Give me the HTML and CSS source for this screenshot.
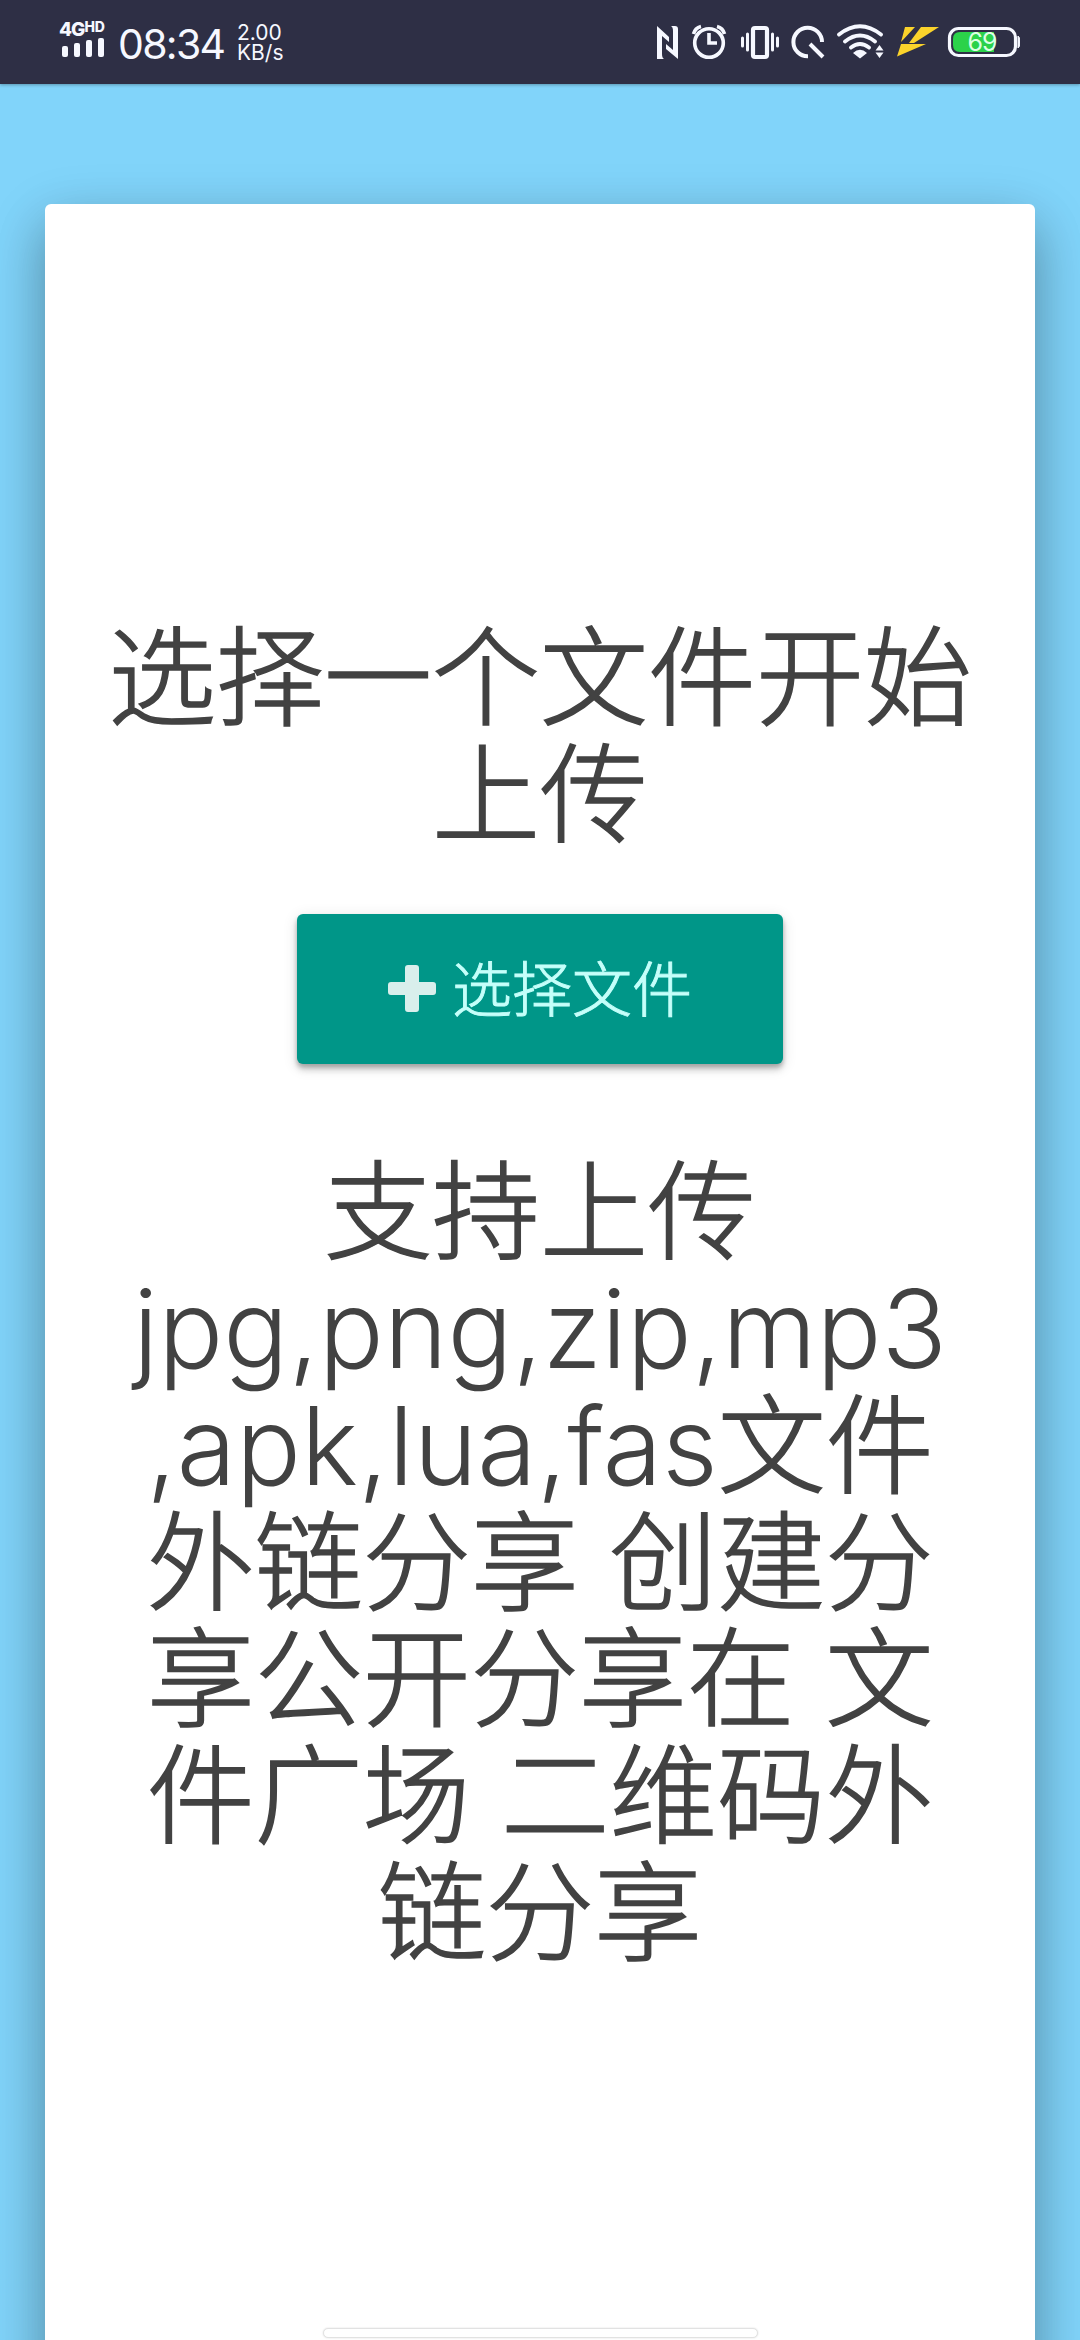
FILE: index.html
```
<!DOCTYPE html>
<html lang="zh-CN">
<head>
<meta charset="utf-8">
<title>选择文件</title>
<link rel="stylesheet" href="styles.css">
</head>
<body>
<header class="status">
  <div class="signal">
    <div class="net"><span class="gen">4G</span><span class="hd">HD</span></div>
    <div class="bars"><i class="b1"></i><i class="b2"></i><i class="b3"></i><i class="b4"></i></div>
  </div>
  <div class="clock">08:34</div>
  <div class="speed"><span>2.00</span><span>KB/s</span></div>
  <svg class="icons" width="370" height="44" viewBox="650 20 370 44" fill="none" stroke="#f6f8ff">
    <path d="M657 26 669 37V42L662 36V54Q662 58 664 59H657ZM678 59 666 49V44L673 50V31Q673 27 671 26H675Q678 26 678 29Z" fill="#f6f8ff" stroke="none"/>
    <g stroke-width="3.6">
      <circle cx="709" cy="43" r="14.300"/>
      <path d="M709 33V43H717"/>
      <path d="M693.500 34Q695 28 701 26.500M724.500 34Q723 28 717 26.500"/>
    </g>
    <rect x="753" y="28" width="14" height="29" rx="2" stroke-width="4.200"/>
    <path d="M742.500 38V46M747.500 34V50M772.500 34V50M777.500 38V46" stroke-width="3" stroke-linecap="round"/>
    <path d="M822 42A14.300 14.300 0 1 0 808 56.300M810 44 823 57" stroke-width="4"/>
    <g stroke-width="3.800" stroke-linecap="round">
      <path d="M839 34.500Q860 18 881 34.500M845 41.500Q860 29.500 875 41.500M851 47.500Q860 40.500 869 47.500"/>
    </g>
    <path d="M853 53Q860 46.500 867 53L860 58.500ZM875.500 50.500 879.500 45 883.500 50.500ZM875.500 52.500 879.500 58 883.500 52.500Z" fill="#f6f8ff" stroke="none"/>
    <path d="M905 27H915L901 42ZM921 27H939L914 43H909ZM901 44H926L897 56.500Z" fill="#fbd32b" stroke="none"/>
    <rect x="949.500" y="28.500" width="66" height="27" rx="9" stroke-width="3.200"/>
    <path d="M1018 36Q1020 37 1020 42T1018 48Z" fill="#f6f8ff" stroke-width="1"/>
    <path d="M960 32H994V52H960Q953 52 953 45V39Q953 32 960 32Z" fill="#2bd24a" stroke="none"/>
    <text x="982" y="51" class="level">69</text>
  </svg>
</header>
<main class="page">
  <section class="card">
    <h3 class="copy"><span>选择一个文件开始</span><span>上传</span></h3>
    <button class="pick" type="button">
      <svg width="48" height="48" viewBox="0 0 48 48"><path d="M20 0H28Q31 0 31 3V17H45Q48 17 48 20V27Q48 30 45 30H31V44Q31 47 28 47H20Q17 47 17 44V30H3Q0 30 0 27V20Q0 17 3 17H17V3Q17 0 20 0Z"/></svg>
      <span class="label">选择文件</span>
    </button>
    <h3 class="copy">
      <span>支持上传</span>
      <span class="ext">jpg,png,zip,mp3</span>
      <span><b class="ext">,apk,lua,fas</b>文件</span>
      <span>外链分享 创建分</span>
      <span>享公开分享在 文</span>
      <span>件广场 二维码外</span>
      <span>链分享</span>
    </h3>
  </section>
</main>
<div class="home"></div>
</body>
</html>
```
FILE: styles.css
```
* { box-sizing: border-box; }
body {
  margin: 0;
  height: 2340px;
  overflow: hidden;
  background: #81d4fa;
  font-family: Inter, "Noto Sans CJK SC", sans-serif;
}
.status {
  height: 84px;
  padding: 0 60px 0 59px;
  display: flex;
  align-items: flex-start;
  background: #2e2f45;
  color: #f6f8ff;
  box-shadow: 0 1px 3px rgba(0, 0, 0, .3);
}
.signal { width: 48px; padding-top: 21px; }
.net { display: flex; height: 17px; line-height: 17px; font-weight: 800; }
.gen { font-size: 19px; letter-spacing: -1px; }
.hd { font-size: 14px; line-height: 12px; }
.bars { display: flex; align-items: flex-end; gap: 6px; height: 19px; padding-left: 3px; }
.bars i { width: 6px; border-radius: 2px; background: #f6f8ff; }
.b1 { height: 11px; }
.b2 { height: 14px; }
.b3 { height: 17px; }
.b4 { height: 19px; }
.clock { width: 130px; padding: 20px 0 0 11px; font-size: 41px; line-height: 48px; letter-spacing: -1.700px; }
.speed { display: flex; flex-direction: column; padding-top: 23px; font-size: 21px; line-height: 20px; }
.icons { margin: 20px 0 0 auto; }
.level { font-size: 25px; text-anchor: middle; fill: #dcffe4; stroke: none; letter-spacing: -1px; }
.page { padding: 120px 45px 0; }
.card {
  height: 2200px;
  padding-top: 416px;
  display: flex;
  flex-direction: column;
  align-items: center;
  border-radius: 6px;
  background: #fff;
  box-shadow: 0 24px 51px rgba(0, 0, 0, .2), 0 18px 60px rgba(0, 0, 0, .19);
}
.copy {
  margin: 0;
  font-size: 108px;
  font-weight: 300;
  line-height: 116.700px;
  color: #424242;
  text-align: center;
  -webkit-text-stroke: 1.600px #424242;
}
.copy > span { display: block; white-space: nowrap; }
.copy .ext { font-weight: 300; -webkit-text-stroke: 0; }
.pick {
  width: 486px;
  height: 150px;
  margin: 61px 0 90px;
  padding: 0;
  display: flex;
  align-items: center;
  justify-content: center;
  gap: 16px;
  border: 0;
  border-radius: 6px;
  background: #009688;
  color: #c5fffa;
  font: 300 60px/150px Inter, "Noto Sans CJK SC", sans-serif;
  box-shadow: 0 6px 6px rgba(0, 0, 0, .14), 0 3px 15px rgba(0, 0, 0, .12), 0 3px 4px rgba(0, 0, 0, .2);
}
.pick svg { fill: #d9efec; }
.label { padding-top: 2px; -webkit-text-stroke: .9px #c5fffa; }
.home {
  position: absolute;
  left: 323px;
  top: 2328px;
  width: 435px;
  height: 10px;
  border: 1px solid #e2e2e2;
  border-radius: 5px;
  background: #fff;
  box-shadow: 0 0 2px #ddd;
}
```
